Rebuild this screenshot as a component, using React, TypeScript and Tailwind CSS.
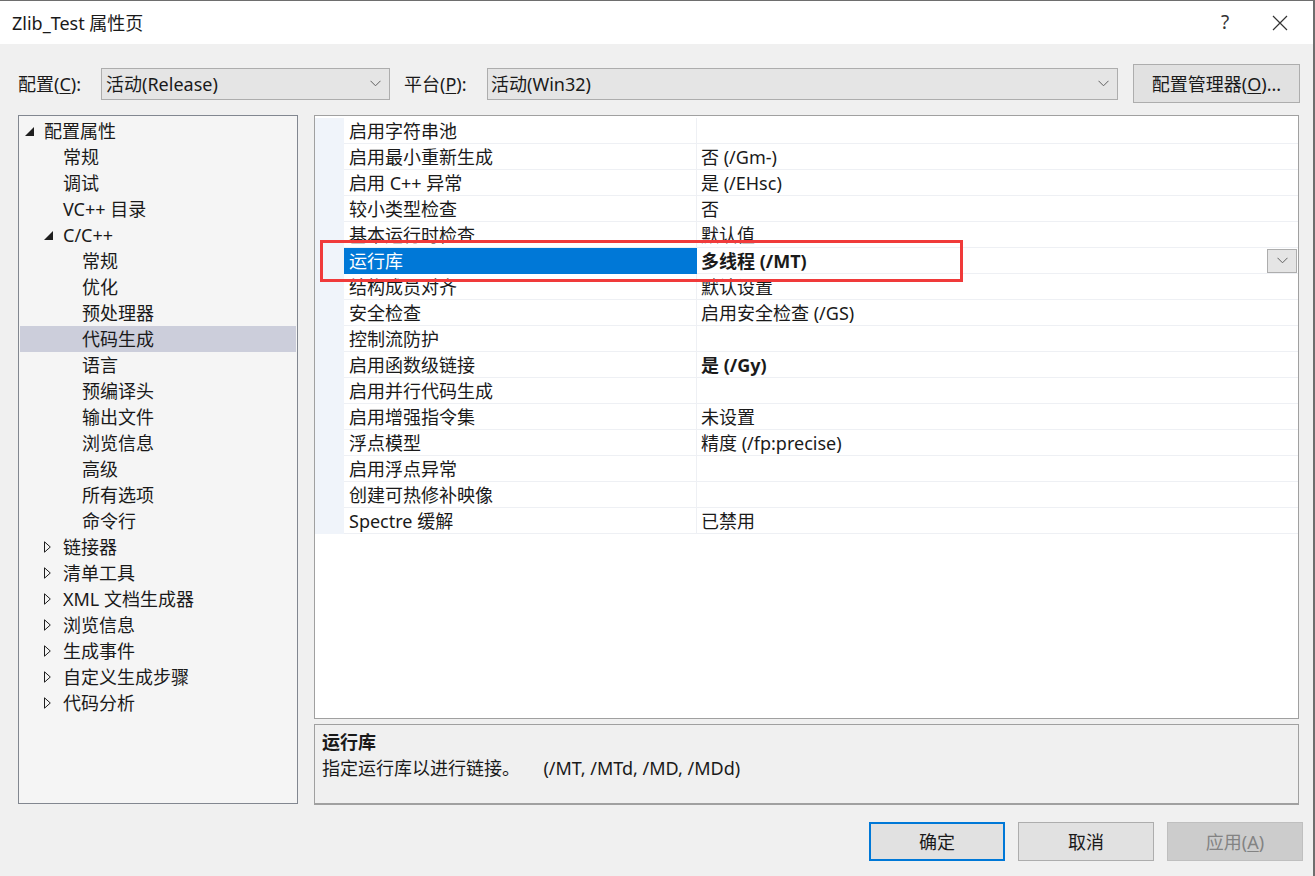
import React from "react";

const font = { fontFamily: '"Noto Sans", "Noto Sans CJK SC", sans-serif' };

const Chevron = ({ className = "" }: { className?: string }) => (
  <svg width="11" height="7" viewBox="0 0 11 7" className={className}>
    <path d="M0.5 0.8 L5.5 5.8 L10.5 0.8" fill="none" stroke="#606060" strokeWidth="1" />
  </svg>
);

const Expanded = () => (
  <svg width="9" height="9" viewBox="0 0 9 9">
    <polygon points="9,0 9,9 0,9" fill="#1e1e1e" />
  </svg>
);

const Collapsed = () => (
  <svg width="7" height="12" viewBox="0 0 7 12">
    <polygon points="0.5,0.8 6.3,6 0.5,11.2" fill="none" stroke="#1e1e1e" strokeWidth="1" />
  </svg>
);

type TreeItem = { label: string; level: number; icon?: "open" | "closed"; selected?: boolean };

const tree: TreeItem[] = [
  { label: "配置属性", level: 0, icon: "open" },
  { label: "常规", level: 1 },
  { label: "调试", level: 1 },
  { label: "VC++ 目录", level: 1 },
  { label: "C/C++", level: 1, icon: "open" },
  { label: "常规", level: 2 },
  { label: "优化", level: 2 },
  { label: "预处理器", level: 2 },
  { label: "代码生成", level: 2, selected: true },
  { label: "语言", level: 2 },
  { label: "预编译头", level: 2 },
  { label: "输出文件", level: 2 },
  { label: "浏览信息", level: 2 },
  { label: "高级", level: 2 },
  { label: "所有选项", level: 2 },
  { label: "命令行", level: 2 },
  { label: "链接器", level: 1, icon: "closed" },
  { label: "清单工具", level: 1, icon: "closed" },
  { label: "XML 文档生成器", level: 1, icon: "closed" },
  { label: "浏览信息", level: 1, icon: "closed" },
  { label: "生成事件", level: 1, icon: "closed" },
  { label: "自定义生成步骤", level: 1, icon: "closed" },
  { label: "代码分析", level: 1, icon: "closed" },
];

const props: { name: string; value: string; bold?: boolean; selected?: boolean }[] = [
  { name: "启用字符串池", value: "" },
  { name: "启用最小重新生成", value: "否 (/Gm-)" },
  { name: "启用 C++ 异常", value: "是 (/EHsc)" },
  { name: "较小类型检查", value: "否" },
  { name: "基本运行时检查", value: "默认值" },
  { name: "运行库", value: "多线程 (/MT)", bold: true, selected: true },
  { name: "结构成员对齐", value: "默认设置" },
  { name: "安全检查", value: "启用安全检查 (/GS)" },
  { name: "控制流防护", value: "" },
  { name: "启用函数级链接", value: "是 (/Gy)", bold: true },
  { name: "启用并行代码生成", value: "" },
  { name: "启用增强指令集", value: "未设置" },
  { name: "浮点模型", value: "精度 (/fp:precise)" },
  { name: "启用浮点异常", value: "" },
  { name: "创建可热修补映像", value: "" },
  { name: "Spectre 缓解", value: "已禁用" },
];

const indent = ["pl-[5px]", "pl-[24px]", "pl-[43px]"];

export default function App() {
  return (
    <div
      style={font}
      className="w-[1315px] h-[876px] bg-[#f0f0f0] border-t border-r-2 border-[#6e6e6e] flex flex-col text-[18px] text-[#1a1a1a] overflow-hidden"
    >
      {/* title bar */}
      <div className="h-[43px] bg-white flex items-center shrink-0">
        <span className="pl-[12px] leading-none">Zlib_Test 属性页</span>
        <div className="ml-auto flex items-center">
          <span className="w-[70px] text-center text-[19px] text-[#333] leading-none">?</span>
          <svg width="16" height="16" viewBox="0 0 16 16" className="mr-[25px] ml-[12px]">
            <path d="M1 1 L15 15 M15 1 L1 15" stroke="#333" strokeWidth="1.2" />
          </svg>
        </div>
      </div>

      {/* config row */}
      <div className="flex items-center h-[39px] mt-[20px] pl-[18px] shrink-0">
        <span className="w-[83px] leading-none">
          配置(<span className="underline underline-offset-2">C</span>):
        </span>
        <div className="w-[289px] h-[32px] bg-[#e5e5e5] border border-[#adadad] flex items-center pl-[4px] pr-[8px]">
          <span className="leading-none">活动(Release)</span>
          <Chevron className="ml-auto" />
        </div>
        <span className="w-[97px] pl-[14px] leading-none">
          平台(<span className="underline underline-offset-2">P</span>):
        </span>
        <div className="w-[631px] h-[32px] bg-[#e5e5e5] border border-[#adadad] flex items-center pl-[3px] pr-[8px]">
          <span className="leading-none">活动(Win32)</span>
          <Chevron className="ml-auto" />
        </div>
        <button className="ml-[15px] w-[167px] h-[39px] bg-[#e1e1e1] border border-[#adadad] flex items-center justify-center leading-none">
          配置管理器(<span className="underline underline-offset-2">O</span>)...
        </button>
      </div>

      {/* main area */}
      <div className="flex mt-[12px] pl-[18px] gap-[16px] h-[690px] shrink-0">
        {/* tree */}
        <div className="w-[280px] h-[689px] bg-[#f5f5f5] border border-[#828790] pt-[2px] px-[1px]">
          {tree.map((t, i) => (
            <div
              key={i}
              className={`h-[26px] flex items-center ${indent[t.level]} ${t.selected ? "bg-[#cccedb]" : ""}`}
            >
              <span className="w-[19px] flex items-center">
                {t.icon === "open" && <Expanded />}
                {t.icon === "closed" && <Collapsed />}
              </span>
              <span className="leading-none whitespace-nowrap">{t.label}</span>
            </div>
          ))}
        </div>

        {/* right column */}
        <div className="flex flex-col gap-[5px] w-[985px]">
          <div className="relative h-[607px] bg-white border border-[#a0a0a0] pt-[2px]">
            {props.map((p, i) => (
              <div key={i} className="h-[26px] flex">
                <div className="w-[29px] bg-[#f0f4fa]" />
                <div
                  className={`w-[353px] flex items-center pl-[5px] border-r border-b ${
                    p.selected ? "bg-[#0078d7] text-white border-[#0078d7]" : "border-[#eef0f4]"
                  }`}
                >
                  <span className="leading-none whitespace-nowrap">{p.name}</span>
                </div>
                <div className="flex-1 flex items-center pl-[4px] border-b border-[#eef0f4] pr-[1px]">
                  <span className={`leading-none whitespace-nowrap ${p.bold ? "font-bold" : ""}`}>{p.value}</span>
                  {p.selected && (
                    <div className="ml-auto w-[30px] h-[24px] bg-[#e5e5e5] border border-[#adadad] flex items-center justify-center">
                      <Chevron />
                    </div>
                  )}
                </div>
              </div>
            ))}
            {/* red annotation box */}
            <div className="absolute left-[5px] top-[124px] w-[643px] h-[42px] border-[3px] border-[#f03a3a] pointer-events-none" />
          </div>

          <div className="h-[81px] bg-[#f0f0f0] border border-[#a0a0a0] border-b-2 px-[7px] pt-[4px]">
            <div className="font-bold leading-[26px]">运行库</div>
            <div className="leading-[26px] whitespace-pre">指定运行库以进行链接。     (/MT, /MTd, /MD, /MDd)</div>
          </div>
        </div>
      </div>

      {/* bottom buttons */}
      <div className="flex justify-end gap-[13px] pr-[10px] mt-[17px]">
        <button className="w-[136px] h-[39px] bg-[#e1e1e1] border-2 border-[#0078d7] leading-none">确定</button>
        <button className="w-[136px] h-[39px] bg-[#e1e1e1] border border-[#adadad] leading-none">取消</button>
        <button className="w-[136px] h-[39px] bg-[#cccccc] border border-[#bfbfbf] text-[#838383] leading-none">
          应用(<span className="underline underline-offset-2">A</span>)
        </button>
      </div>
    </div>
  );
}
